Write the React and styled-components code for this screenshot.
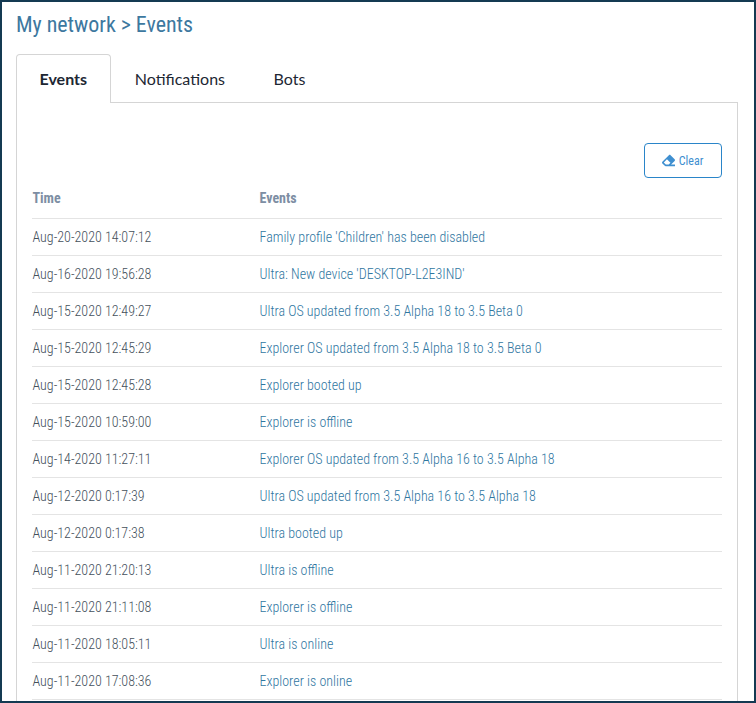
import React from "react";
import styled, { createGlobalStyle } from "styled-components";
import { FaEraser } from "react-icons/fa";

const Global = createGlobalStyle`
  html, body { margin: 0; padding: 0; background: #fff; }
  body { font-family: "Roboto", "Liberation Sans", sans-serif; }
`;

const Frame = styled.div`
  box-sizing: border-box;
  width: 756px;
  height: 703px;
  border: 2px solid #143a52;
  background: #fff;
  padding: 0 16px 0 14px;
  overflow: hidden;
`;

const Title = styled.h1`
  margin: 0;
  padding-top: 9px;
  height: 43px;
  box-sizing: border-box;
  font: 400 22px/28px "Roboto", sans-serif;
  font-stretch: 75%;
  letter-spacing: -0.05px;
  color: #3d789f;
`;

const Tabs = styled.div`
  display: flex;
  height: 49px;
  margin-top: 9px;
`;

const Tab = styled.div`
  box-sizing: border-box;
  height: 49px;
  padding: 0 ${(p) => (p.$active ? "22.5px" : "23.25px")};
  font: ${(p) => (p.$active ? 700 : 400)} 16px/48px "Lato", sans-serif;
  color: #1d2733;
  background: ${(p) => (p.$active ? "#fff" : "transparent")};
  position: ${(p) => (p.$active ? "relative" : "static")};
  z-index: ${(p) => (p.$active ? 1 : "auto")};
  border: 1px solid ${(p) => (p.$active ? "#d5d5d5" : "transparent")};
  border-bottom: 0;
  border-radius: 4px 4px 0 0;
`;

const Panel = styled.div`
  border: 1px solid #d5d5d5;
  margin-top: -1px;
  padding: 40px 15px 0;
  height: 620px;
`;

const Toolbar = styled.div`
  display: flex;
  justify-content: flex-end;
`;

const ClearButton = styled.button`
  box-sizing: border-box;
  width: 78px;
  height: 35px;
  display: flex;
  align-items: center;
  justify-content: center;
  gap: 4px;
  padding: 0 1px 0 0;
  background: #fff;
  border: 1px solid #2a85c9;
  border-radius: 4px;
  color: #3f8fd0;
  font: 400 12px "Roboto", sans-serif;
  font-stretch: 75%;
  svg { width: 13px; height: 13px; }
`;

const Table = styled.div`
  margin-top: 2px;
`;

const Row = styled.div`
  display: grid;
  grid-template-columns: 227.5px 1fr;
  height: 37px;
  box-sizing: border-box;
  border-bottom: 1px solid #e4e4e4;
  align-items: center;
  font: 300 14px "Roboto", sans-serif;
  font-stretch: 75%;
  & > span:first-child { padding-left: 0.5px; }
`;

const HeadRow = styled(Row)`
  height: 39px;
  padding-bottom: 2px;
  font-weight: 700;
  color: #7d8ea3;
`;

const Time = styled.span`
  color: #44505b;
`;

const Message = styled.span`
  color: #2f769f;
`;

const events = [
  ["Aug-20-2020 14:07:12", "Family profile 'Children' has been disabled"],
  ["Aug-16-2020 19:56:28", "Ultra: New device 'DESKTOP-L2E3IND'"],
  ["Aug-15-2020 12:49:27", "Ultra OS updated from 3.5 Alpha 18 to 3.5 Beta 0"],
  ["Aug-15-2020 12:45:29", "Explorer OS updated from 3.5 Alpha 18 to 3.5 Beta 0"],
  ["Aug-15-2020 12:45:28", "Explorer booted up"],
  ["Aug-15-2020 10:59:00", "Explorer is offline"],
  ["Aug-14-2020 11:27:11", "Explorer OS updated from 3.5 Alpha 16 to 3.5 Alpha 18"],
  ["Aug-12-2020 0:17:39", "Ultra OS updated from 3.5 Alpha 16 to 3.5 Alpha 18"],
  ["Aug-12-2020 0:17:38", "Ultra booted up"],
  ["Aug-11-2020 21:20:13", "Ultra is offline"],
  ["Aug-11-2020 21:11:08", "Explorer is offline"],
  ["Aug-11-2020 18:05:11", "Ultra is online"],
  ["Aug-11-2020 17:08:36", "Explorer is online"],
];

export default function App() {
  return (
    <Frame>
      <Global />
      <Title>My network &gt; Events</Title>
      <Tabs>
        <Tab $active>Events</Tab>
        <Tab>Notifications</Tab>
        <Tab>Bots</Tab>
      </Tabs>
      <Panel>
        <Toolbar>
          <ClearButton><FaEraser />Clear</ClearButton>
        </Toolbar>
        <Table>
          <HeadRow><span>Time</span><span>Events</span></HeadRow>
          {events.map(([t, m]) => (
            <Row key={t}><Time>{t}</Time><Message>{m}</Message></Row>
          ))}
        </Table>
      </Panel>
    </Frame>
  );
}
